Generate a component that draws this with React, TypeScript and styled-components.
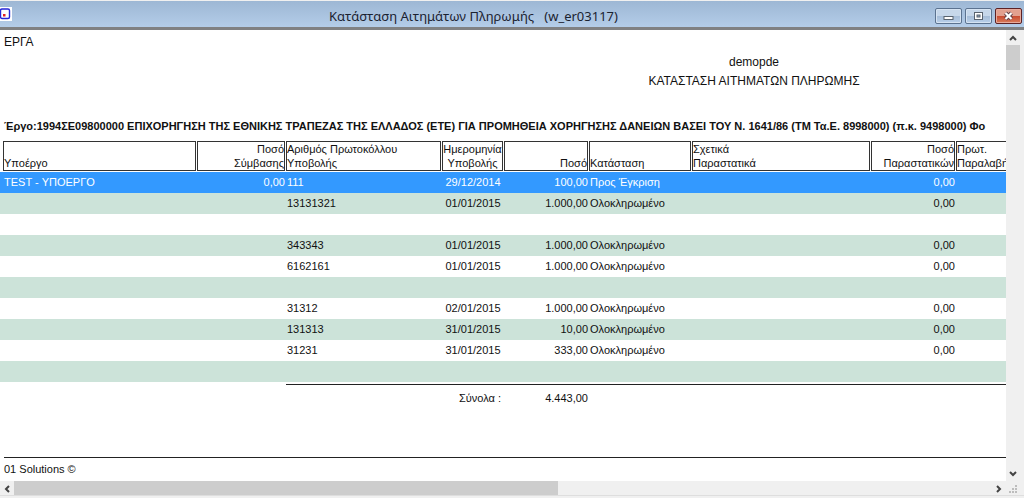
import React from "react";
import styled, { createGlobalStyle, css } from "styled-components";

const Global = createGlobalStyle`
  * { box-sizing: border-box; }
  body { margin: 0; background: #fff; }
  button { font: inherit; padding: 0; margin: 0; }
`;

const Window = styled.div`
  display: flex;
  flex-direction: column;
  min-height: 100vh;
  padding: 1px 0 2px;
  background: #f0f0f0;
  color: #111;
  font-family: "Liberation Sans", Arial, sans-serif;
  font-size: 12px;
  overflow: hidden;
`;

const TitleBar = styled.header`
  display: flex;
  align-items: center;
  height: 29px;
  padding-right: 2px;
  background: linear-gradient(#9db7d4, #b3cce8 25px, #b3cce8 25px);
  border-bottom: 3px solid #808183;
`;

const Title = styled.h1`
  flex: 1;
  margin: 0;
  padding-top: 4px;
  text-align: center;
  font: 400 13px/18px "Noto Sans", "Open Sans", sans-serif;
  color: #1b2230;
  white-space: pre;
`;

const WindowButtons = styled.div`
  display: flex;
  gap: 3px;
  padding-top: 3px;
`;

const WindowButton = styled.button<{ $danger?: boolean }>`
  display: flex;
  align-items: center;
  justify-content: center;
  width: 27px;
  height: 16px;
  border: 1px solid #5c7390;
  border-radius: 2px;
  background: linear-gradient(#c6d7ea 48%, #a5bcd7 50%, #b9d0ea);
  box-shadow: inset 0 0 0 1px #d5e3f2;
  ${(p) =>
    p.$danger &&
    css`
      border-color: #5d2224;
      background: linear-gradient(#e2a08f 48%, #c8492f 50%, #d97d5c);
      box-shadow: inset 0 0 0 1px #e8ab9c;
    `}
`;

const Middle = styled.div`
  display: flex;
  flex: 1;
`;

const Viewport = styled.main`
  flex: 1;
  min-width: 0;
  display: flex;
  overflow: hidden;
  background: #fff;
`;

const Sheet = styled.div`
  flex: none;
  width: 1508px;
  display: flex;
  flex-direction: column;
`;

const Organisation = styled.div`
  padding: 4px 4px 0;
  line-height: 16px;
`;

const Heading = styled.div`
  padding-top: 3px;
  text-align: center;
  line-height: 19px;
`;

const Project = styled.h2`
  margin: 0;
  padding: 27px 4px 7px;
  font-size: 11px;
  line-height: 16px;
  white-space: nowrap;
`;

const Table = styled.table`
  width: 100%;
  table-layout: fixed;
  border-collapse: collapse;
  font-size: 11px;
`;

type Align = "left" | "right" | "center";

const HeadCell = styled.th<{ $align: Align; $first?: boolean }>`
  padding: 0 1px 1px ${(p) => (p.$first ? 3 : 0)}px;
  font-weight: 400;
  line-height: 14px;
  text-align: ${(p) => p.$align};
`;

const HeadBox = styled.div`
  display: flex;
  flex-direction: column;
  justify-content: flex-end;
  height: 30px;
  border: 1px solid #333;
  white-space: pre;
`;

const Row = styled.tr<{ $selected: boolean }>`
  height: 21px;
  &:nth-child(even) { background: #cce3d9; }
  ${(p) => p.$selected && css`&& { background: #3399ff; color: #fff; }`}
`;

const Cell = styled.td<{ $align: Align; $first?: boolean }>`
  padding: 0 1px 0 ${(p) => (p.$first ? 4 : 1)}px;
  line-height: 20px;
  text-align: ${(p) => p.$align};
  vertical-align: top;
  white-space: nowrap;
`;

const TotalCell = styled.td`
  padding: 2px 0 0;
  text-align: right;
`;

const TotalBox = styled.div<{ $inset?: boolean }>`
  height: 27px;
  padding: 5px ${(p) => (p.$inset ? 3 : 1)}px 0 0;
  border-top: 1px solid #222;
  line-height: 16px;
`;

const SheetFooter = styled.footer`
  margin: auto 0 0 4px;
  padding: 3px 0 4px;
  border-top: 1px solid #222;
  line-height: 16px;
  font-size: 11px;
`;

const VerticalBar = styled.div`
  display: flex;
  flex-direction: column;
  width: 18px;
  padding-right: 4px;
  background: #f0f0f0;
`;

const HorizontalBar = styled.div`
  display: flex;
  height: 15px;
  padding-right: 4px;
  border-bottom: 1px solid #dedede;
  background: #f0f0f0;
`;

const Track = styled.div<{ $vertical?: boolean }>`
  flex: 1;
  display: flex;
  flex-direction: ${(p) => (p.$vertical ? "column" : "row")};
`;

const Thumb = styled.div<{ $share: number }>`
  flex: 0 0 ${(p) => p.$share * 100}%;
  background: #cdcdcd;
`;

const ArrowButton = styled.button`
  display: flex;
  align-items: center;
  justify-content: center;
  width: 14px;
  height: 15px;
  border: 0;
  background: transparent;
`;

const arrows = {
  up: "M1 6 4 3 7 6",
  down: "M1 2 4 5 7 2",
  left: "M6 1 3 4 6 7",
  right: "M2 1 5 4 2 7",
};

const Arrow = ({ to }: { to: keyof typeof arrows }) => (
  <ArrowButton aria-label={`Scroll ${to}`}>
    <svg width="8" height="8" viewBox="0 0 8 8">
      <path d={arrows[to]} fill="none" stroke="#444" strokeWidth="2" />
    </svg>
  </ArrowButton>
);

const columns: { label: string; width?: number; align: Align }[] = [
  { label: "Υποέργο", width: 197, align: "left" },
  { label: "Ποσό\nΣύμβασης", width: 89, align: "right" },
  { label: "Αριθμός Πρωτοκόλλου\nΥποβολής", width: 156, align: "left" },
  { label: "Ημερομηνία\nΥποβολής", width: 62, align: "center" },
  { label: "Ποσό", width: 85, align: "right" },
  { label: "Κατάσταση", width: 103, align: "left" },
  { label: "Σχετικά\nΠαραστατικά", width: 179, align: "left" },
  { label: "Ποσό\nΠαραστατικών", width: 85, align: "right" },
  { label: "Πρωτ.\nΠαραλαβής", align: "left" },
];

const done = "Ολοκληρωμένο";
const rows: string[][] = [
  ["TEST - ΥΠΟΕΡΓΟ", "0,00", "111", "29/12/2014", "100,00", "Προς Έγκριση", "", "0,00", ""],
  ["", "", "13131321", "01/01/2015", "1.000,00", done, "", "0,00", ""],
  Array(9).fill(""),
  ["", "", "343343", "01/01/2015", "1.000,00", done, "", "0,00", ""],
  ["", "", "6162161", "01/01/2015", "1.000,00", done, "", "0,00", ""],
  Array(9).fill(""),
  ["", "", "31312", "02/01/2015", "1.000,00", done, "", "0,00", ""],
  ["", "", "131313", "31/01/2015", "10,00", done, "", "0,00", ""],
  ["", "", "31231", "31/01/2015", "333,00", done, "", "0,00", ""],
  Array(9).fill(""),
];

export default function App() {
  return (
    <>
      <Global />
      <Window>
        <TitleBar>
          <svg width="12" height="14" viewBox="0 0 12 14">
            <rect width="12" height="14" fill="#fff" />
            <rect x="0.5" y="2" width="9" height="9.5" rx="1.5" fill="#fff" stroke="#2626d8" strokeWidth="1.4" />
            <rect x="3" y="7" width="2.5" height="2.5" fill="#e02020" />
          </svg>
          <Title>{"Κατάσταση Αιτημάτων Πληρωμής   (w_er03117)"}</Title>
          <WindowButtons>
            <WindowButton aria-label="Minimize">
              <svg width="11" height="10" viewBox="0 0 11 10">
                <rect x="1" y="5.5" width="9" height="3" fill="#fff" stroke="#59636f" />
              </svg>
            </WindowButton>
            <WindowButton aria-label="Maximize">
              <svg width="11" height="10" viewBox="0 0 11 10">
                <rect x="1.5" y="1.5" width="8" height="7" fill="#fff" stroke="#59636f" />
                <rect x="4" y="4" width="3" height="2" fill="#8fa4bd" stroke="#59636f" />
              </svg>
            </WindowButton>
            <WindowButton aria-label="Close" $danger>
              <svg width="11" height="10" viewBox="0 0 11 10">
                <path d="M2.5 2 8.5 8M8.5 2 2.5 8" stroke="#5e4048" strokeWidth="4" />
                <path d="M2.5 2 8.5 8M8.5 2 2.5 8" stroke="#fff" strokeWidth="2.2" />
              </svg>
            </WindowButton>
          </WindowButtons>
        </TitleBar>
        <Middle>
          <Viewport>
            <Sheet>
              <Organisation>ΕΡΓΑ</Organisation>
              <Heading>
                demopde
                <br />
                ΚΑΤΑΣΤΑΣΗ ΑΙΤΗΜΑΤΩΝ ΠΛΗΡΩΜΗΣ
              </Heading>
              <Project>
                Έργο:1994ΣΕ09800000 ΕΠΙΧΟΡΗΓΗΣΗ ΤΗΣ ΕΘΝΙΚΗΣ ΤΡΑΠΕΖΑΣ ΤΗΣ ΕΛΛΑΔΟΣ (ΕΤΕ) ΓΙΑ ΠΡΟΜΗΘΕΙΑ ΧΟΡΗΓΗΣΗΣ
                ΔΑΝΕΙΩΝ ΒΑΣΕΙ ΤΟΥ Ν. 1641/86 (ΤΜ Τα.Ε. 8998000) (π.κ. 9498000) Φο
              </Project>
              <Table>
                <colgroup>
                  {columns.map((c) => (
                    <col key={c.label} width={c.width} />
                  ))}
                </colgroup>
                <thead>
                  <tr>
                    {columns.map((c, i) => (
                      <HeadCell key={c.label} $align={c.align} $first={i === 0}>
                        <HeadBox>{c.label}</HeadBox>
                      </HeadCell>
                    ))}
                  </tr>
                </thead>
                <tbody>
                  {rows.map((row, r) => (
                    <Row key={r} $selected={r === 0}>
                      {row.map((value, i) => (
                        <Cell key={i} $align={columns[i].align} $first={i === 0}>
                          {value}
                        </Cell>
                      ))}
                    </Row>
                  ))}
                </tbody>
                <tfoot>
                  <tr>
                    <TotalCell colSpan={2} />
                    <TotalCell colSpan={2}>
                      <TotalBox $inset>Σύνολα :</TotalBox>
                    </TotalCell>
                    <TotalCell>
                      <TotalBox>4.443,00</TotalBox>
                    </TotalCell>
                    <TotalCell colSpan={4}>
                      <TotalBox />
                    </TotalCell>
                  </tr>
                </tfoot>
              </Table>
              <SheetFooter>01 Solutions ©</SheetFooter>
            </Sheet>
          </Viewport>
          <VerticalBar>
            <Arrow to="up" />
            <Track $vertical>
              <Thumb $share={0.06} />
            </Track>
            <Arrow to="down" />
          </VerticalBar>
        </Middle>
        <HorizontalBar>
          <Arrow to="left" />
          <Track>
            <Thumb $share={1006 / 1808} />
          </Track>
          <Arrow to="right" />
          <svg width="14" height="14" viewBox="0 0 14 14">
            <path
              d="M9 4h2v2h-2zM9 7h2v2h-2zM6 7h2v2h-2zM9 10h2v2h-2zM6 10h2v2h-2zM3 10h2v2h-2z"
              fill="#bdbdbd"
            />
          </svg>
        </HorizontalBar>
      </Window>
    </>
  );
}
